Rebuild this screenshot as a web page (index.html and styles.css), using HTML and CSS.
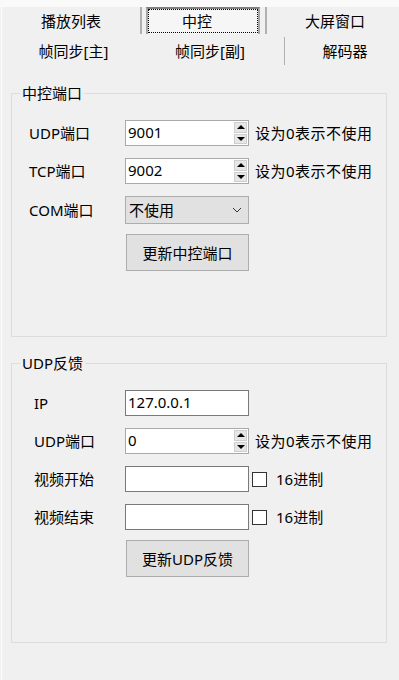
FILE: index.html
```html
<!DOCTYPE html>
<html lang="zh-CN">
<head>
    <meta charset="UTF-8">
    <meta name="viewport" content="width=device-width, initial-scale=1.0">
    <title>中控</title>
    <link rel="stylesheet" href="styles.css">
</head>
<body>
    <div class="topstrip"></div>

    <div class="page">
        <!-- Tab header, two rows -->
        <div class="tab-row tab-row-top">
            <div class="tab tab-list">播放列表</div>
            <div class="tab-sep sep-a"></div>
            <div class="tab tab-active"><span class="focus-rect">中控</span></div>
            <div class="tab-sep sep-b"></div>
            <div class="tab tab-screen">大屏窗口</div>
        </div>
        <div class="tab-row tab-row-bottom">
            <div class="tab tab-main">帧同步[主]</div>
            <div class="tab tab-sub">帧同步[副]</div>
            <div class="tab-sep sep-c"></div>
            <div class="tab tab-decoder">解码器</div>
        </div>

        <!-- 中控端口 -->
        <fieldset class="group group-ctrl">
            <legend>中控端口</legend>
            <div class="rows">
                <div class="field">
                    <label>UDP端口</label>
                    <div class="spin">
                        <span class="spin-value">9001</span>
                        <span class="spin-btns"><span class="spin-up"></span><span class="spin-down"></span></span>
                    </div>
                    <span class="hint">设为0表示不使用</span>
                </div>
                <div class="field">
                    <label>TCP端口</label>
                    <div class="spin">
                        <span class="spin-value">9002</span>
                        <span class="spin-btns"><span class="spin-up"></span><span class="spin-down"></span></span>
                    </div>
                    <span class="hint">设为0表示不使用</span>
                </div>
                <div class="field field-select">
                    <label>COM端口</label>
                    <div class="select">
                        <span>不使用</span>
                        <svg width="10" height="6" viewBox="0 0 10 6"><polyline points="1,1 5,5 9,1" fill="none" stroke="#333" stroke-width="1"/></svg>
                    </div>
                </div>
                <div class="field field-button">
                    <button class="btn">更新中控端口</button>
                </div>
            </div>
        </fieldset>

        <!-- UDP反馈 -->
        <fieldset class="group group-udp">
            <legend>UDP反馈</legend>
            <div class="rows">
                <div class="field">
                    <label>IP</label>
                    <div class="textbox">127.0.0.1</div>
                </div>
                <div class="field">
                    <label>UDP端口</label>
                    <div class="spin">
                        <span class="spin-value">0</span>
                        <span class="spin-btns"><span class="spin-up"></span><span class="spin-down"></span></span>
                    </div>
                    <span class="hint">设为0表示不使用</span>
                </div>
                <div class="field">
                    <label>视频开始</label>
                    <div class="textbox"></div>
                    <span class="checkbox"></span>
                    <span class="check-label">16进制</span>
                </div>
                <div class="field">
                    <label>视频结束</label>
                    <div class="textbox"></div>
                    <span class="checkbox"></span>
                    <span class="check-label">16进制</span>
                </div>
                <div class="field field-button">
                    <button class="btn">更新UDP反馈</button>
                </div>
            </div>
        </fieldset>
    </div>
</body>
</html>
```

FILE: styles.css
```css
body {
    margin: 0;
    background: #f0f0f0;
    font-family: "Noto Sans", "Noto Sans CJK SC", sans-serif;
    font-size: 15px;
    color: #000;
}

.topstrip {
    height: 7px;
    background: #fafafa;
}

.page {
    margin-left: 1px;
    border-left: 1px solid #fdfdfd;
    height: 673px;
}

/* Tabs */
.tab-row {
    display: flex;
}

.tab-row-top {
    height: 27px;
}

.tab-row-bottom {
    height: 34px;
    align-items: center;
}

.tab {
    display: flex;
    align-items: center;
    justify-content: center;
    height: 100%;
    line-height: 20px;
}

.tab-list {
    width: 138px;
    padding-bottom: 1px;
}

.tab-sep {
    width: 2px;
    background: #b0b0b0;
}

.sep-a {
    margin-right: 4px;
}

.tab-active {
    width: 114px;
    box-sizing: border-box;
    border: 2px solid #a6a6a6;
    border-top-color: #808080;
    border-bottom: none;
    background: #f6f6f6;
}

.focus-rect {
    flex: 1;
    align-self: stretch;
    display: flex;
    align-items: center;
    justify-content: center;
    padding-right: 12px;
    border: 1px dotted #000;
    margin-bottom: 1px;
}

.sep-b {
    margin-left: 5px;
}

.tab-screen {
    flex: 1;
    padding-left: 4px;
}

.tab-main {
    width: 143px;
}

.tab-sub {
    width: 130px;
}

.sep-c {
    width: 1px;
    height: 28px;
    margin-left: 9px;
}

.tab-decoder {
    flex: 1;
    padding-left: 6px;
}

/* Group boxes */
.group {
    margin: 15px 12px 0 9px;
    padding: 0 12px 0 8px;
    border: 1px solid #dcdcdc;
    box-sizing: border-box;
    min-width: 0;
}

.group legend {
    padding: 0 2px;
    line-height: 20px;
}

.group-ctrl {
    height: 254px;
    --label-w: 96px;
    --row-indent: 9px;
}

.group-udp {
    margin-top: 16px;
    height: 290px;
    --label-w: 91px;
    --row-indent: 14px;
}

.rows {
    display: flex;
    flex-direction: column;
    gap: 12px;
    padding-top: 17px;
    padding-left: var(--row-indent);
}

.field {
    display: flex;
    align-items: center;
    height: 26px;
}

.field label {
    width: var(--label-w);
    flex-shrink: 0;
    line-height: 20px;
}

.field-select {
    height: 28px;
}

.field-button {
    height: 37px;
    padding-left: calc(var(--label-w) + 1px);
    margin-top: -2px;
}

/* Inputs */
.textbox,
.spin {
    width: 124px;
    height: 26px;
    box-sizing: border-box;
    background: #fff;
    border: 1px solid #7a7a7a;
    padding-left: 2px;
    line-height: 22px;
    flex-shrink: 0;
}

.spin {
    display: flex;
    border-color: #a9a9a9;
}

.spin-value {
    flex: 1;
}

.spin-btns {
    display: flex;
    flex-direction: column;
    gap: 1px;
    width: 13px;
    margin: 1px 1px 1px 0;
}

.spin-up,
.spin-down {
    flex: 1;
    display: flex;
    align-items: center;
    justify-content: center;
    background: #e6e6e6;
    border: 1px solid #cfcfcf;
}

.spin-up::before {
    content: "";
    border-left: 4px solid transparent;
    border-right: 4px solid transparent;
    border-bottom: 4px solid #000;
}

.spin-down::before {
    content: "";
    border-left: 4px solid transparent;
    border-right: 4px solid transparent;
    border-top: 4px solid #000;
}

.hint {
    margin-left: 6px;
    white-space: nowrap;
    line-height: 20px;
    letter-spacing: 0.5px;
}

.select {
    display: flex;
    align-items: center;
    justify-content: space-between;
    width: 124px;
    height: 28px;
    box-sizing: border-box;
    padding: 0 6px 0 3px;
    background: #e1e1e1;
    border: 1px solid #adadad;
    line-height: 20px;
}

.btn {
    width: 123px;
    height: 37px;
    padding: 0;
    background: #e1e1e1;
    border: 1px solid #adadad;
    font-family: inherit;
    font-size: 15px;
    color: #000;
}

.checkbox {
    width: 15px;
    height: 15px;
    box-sizing: border-box;
    margin-left: 3px;
    background: #fff;
    border: 1px solid #333;
    flex-shrink: 0;
}

.check-label {
    margin-left: 9px;
    line-height: 20px;
}
```
